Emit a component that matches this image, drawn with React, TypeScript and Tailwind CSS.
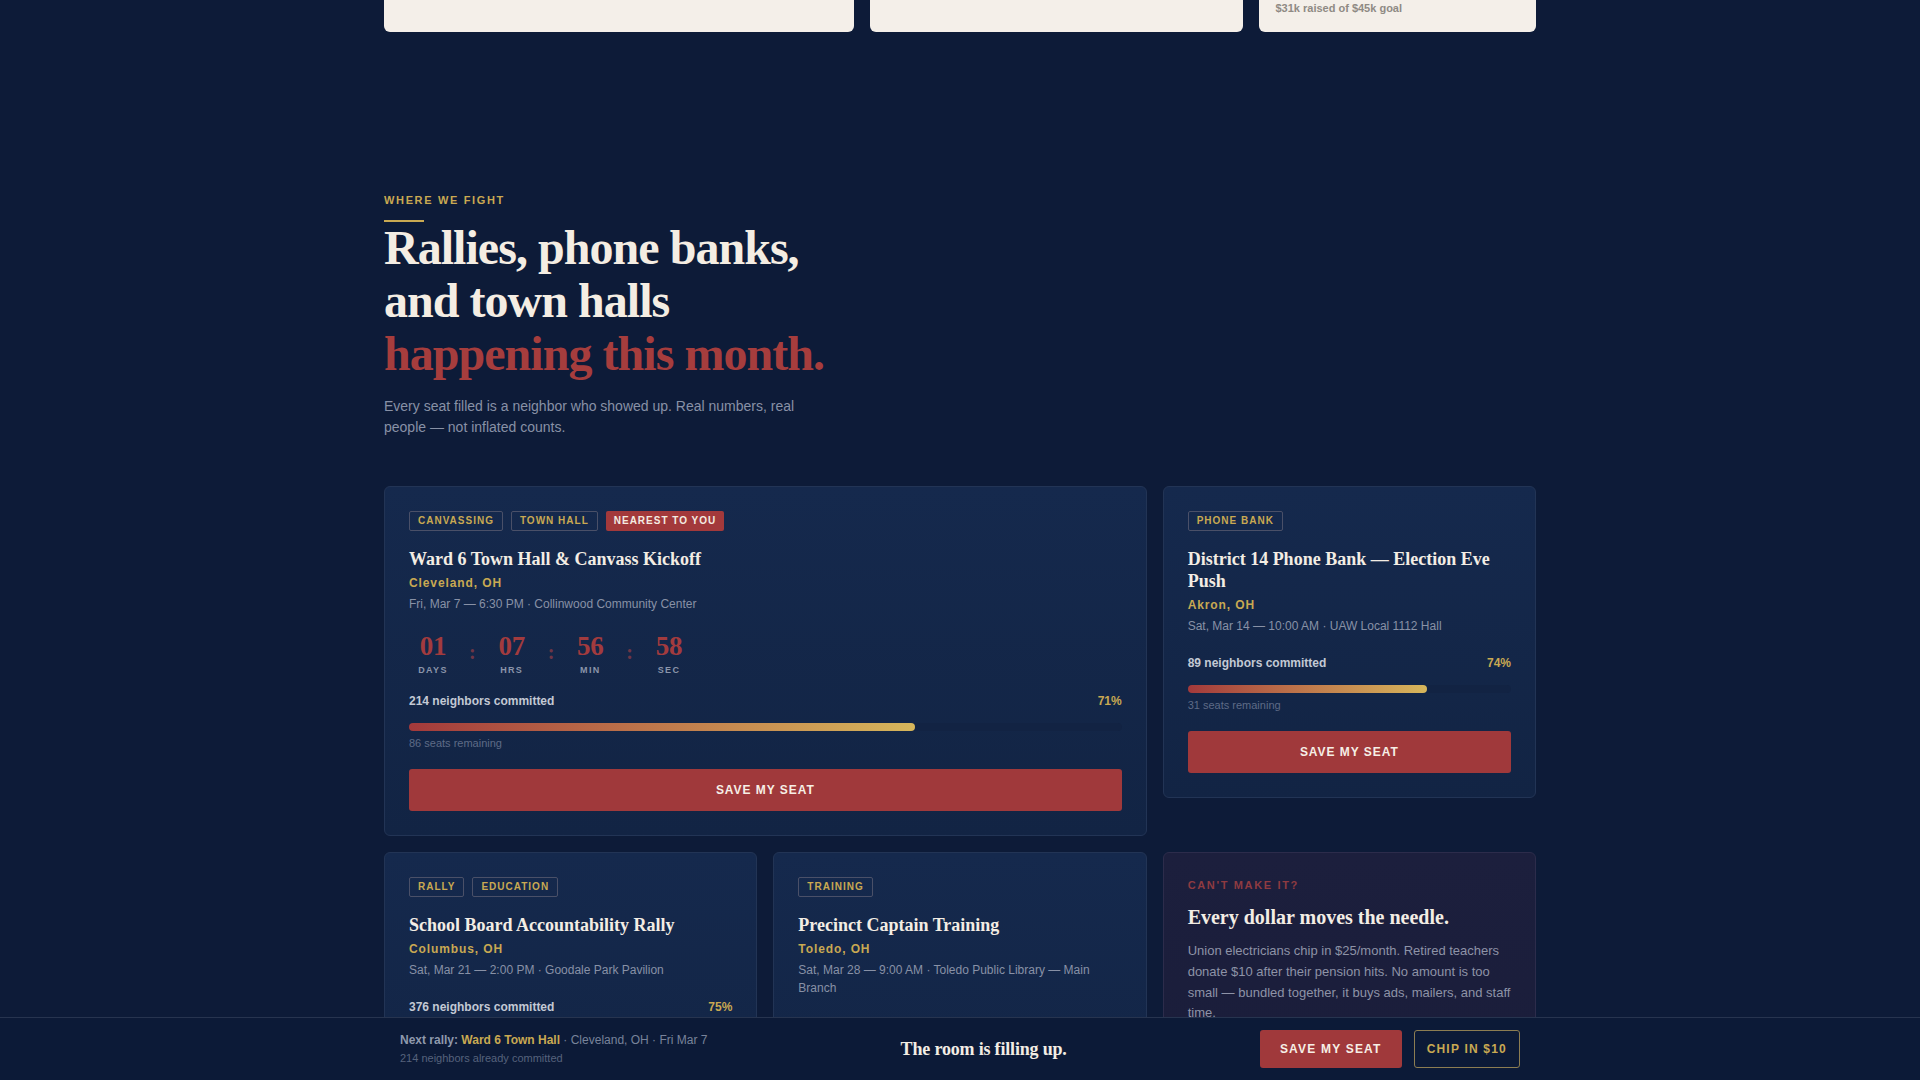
import { FC } from 'react'

type EventItem = {
  tags: string[]
  nearest?: boolean
  title: string
  city: string
  when: string
  committed: number
  pct: number
  remaining: number
  countdown?: { value: string; label: string }[]
}

const serif = "font-['Liberation_Serif','Times_New_Roman',serif]"

const events: EventItem[] = [
  {
    tags: ['Canvassing', 'Town Hall'],
    nearest: true,
    title: 'Ward 6 Town Hall & Canvass Kickoff',
    city: 'Cleveland, OH',
    when: 'Fri, Mar 7 — 6:30 PM · Collinwood Community Center',
    committed: 214,
    pct: 71,
    remaining: 86,
    countdown: [
      { value: '01', label: 'Days' },
      { value: '07', label: 'Hrs' },
      { value: '56', label: 'Min' },
      { value: '58', label: 'Sec' },
    ],
  },
  {
    tags: ['Phone Bank'],
    title: 'District 14 Phone Bank — Election Eve Push',
    city: 'Akron, OH',
    when: 'Sat, Mar 14 — 10:00 AM · UAW Local 1112 Hall',
    committed: 89,
    pct: 74,
    remaining: 31,
  },
  {
    tags: ['Rally', 'Education'],
    title: 'School Board Accountability Rally',
    city: 'Columbus, OH',
    when: 'Sat, Mar 21 — 2:00 PM · Goodale Park Pavilion',
    committed: 376,
    pct: 75,
    remaining: 124,
  },
  {
    tags: ['Training'],
    title: 'Precinct Captain Training',
    city: 'Toledo, OH',
    when: 'Sat, Mar 28 — 9:00 AM · Toledo Public Library — Main Branch',
    committed: 38,
    pct: 63,
    remaining: 22,
  },
]

const Tag: FC<{ label: string; hot?: boolean }> = ({ label, hot }) =>
  hot ? (
    <span className="rounded-[2px] bg-[#a3393b] px-2 py-1 text-[10px] font-bold uppercase leading-3 tracking-[0.1em] text-[#f4ece2]">
      {label}
    </span>
  ) : (
    <span className="rounded-[2px] border border-[#4a5068] px-2 py-[3px] text-[10px] font-bold uppercase leading-3 tracking-[0.1em] text-[#c9a952]">
      {label}
    </span>
  )

const Countdown: FC<{ units: { value: string; label: string }[] }> = ({ units }) => (
  <div className="mt-5 flex items-center">
    {units.map((u, i) => (
      <div key={u.label} className="flex items-center">
        {i > 0 && <span className={`${serif} mx-3 -mt-1 text-[20px] font-bold leading-none text-[#6f3646]`}>:</span>}
        <div className="flex w-12 flex-col items-center">
          <span className={`${serif} text-[27px] font-bold leading-none tracking-[-0.01em] text-[#a23b3e]`}>{u.value}</span>
          <span className="mt-1 text-[9px] font-bold uppercase leading-3 tracking-[0.15em] text-[#8b95aa]">{u.label}</span>
        </div>
      </div>
    ))}
  </div>
)

const EventCard: FC<{ event: EventItem; wide?: boolean }> = ({ event, wide }) => (
  <div
    className={`${wide ? 'col-span-2' : ''} rounded-md border border-[#223455] bg-gradient-to-b from-[#15294d] to-[#122444] p-6`}
  >
    <div className="flex gap-2">
      {event.tags.map((t) => (
        <Tag key={t} label={t} />
      ))}
      {event.nearest && <Tag label="Nearest to you" hot />}
    </div>
    <h3 className={`${serif} mt-4.5 text-[18px] font-bold leading-[1.2] text-[#f3ede4]`}>{event.title}</h3>
    <div className="mt-1 text-xs font-bold leading-4 tracking-[0.075em] text-[#c9a952]">{event.city}</div>
    <div className="mt-1 text-xs leading-[18px] text-[#8891a6]">{event.when}</div>

    {event.countdown && <Countdown units={event.countdown} />}

    <div className={event.countdown ? 'mt-[17px]' : 'mt-5'}>
      <div className="flex items-center justify-between text-xs font-bold leading-4">
        <span className="text-[#c3c9d4]">{event.committed} neighbors committed</span>
        <span className="text-[#c9a952]">{event.pct}%</span>
      </div>
      <div className="mt-3.5 h-2 w-full rounded-full bg-[#122343]">
        <div
          className="h-2 rounded-full bg-gradient-to-r from-[#a3393b] to-[#d6b65b]"
          style={{ width: `${event.pct}%` }}
        />
      </div>
      <div className="mt-1 text-[11px] leading-4 text-[#5e6b86]">{event.remaining} seats remaining</div>
    </div>

    <button className="mt-[18px] flex h-[42px] w-full items-center justify-center rounded-[3px] bg-[#a0393b] text-xs font-bold uppercase tracking-[0.08em] text-[#f6efe6]">
      Save my seat
    </button>
  </div>
)

const DonateCard: FC = () => (
  <div className="rounded-md border border-[#2c2c4b] bg-gradient-to-b from-[#1c1f3d] to-[#1a1d3a] p-6">
    <div className="text-[11px] font-bold uppercase leading-4 tracking-[0.15em] text-[#8f3b41]">Can&apos;t make it?</div>
    <h3 className={`${serif} mt-3 text-[20px] font-bold leading-[1.2] text-[#f3ede4]`}>Every dollar moves the needle.</h3>
    <p className="mt-3 text-[13px] leading-[1.6] text-[#8e93a7]">
      Union electricians chip in $25/month. Retired teachers donate $10 after their pension hits. No amount is too
      small — bundled together, it buys ads, mailers, and staff time.
    </p>
    <button className="mt-5 flex h-[42px] w-full items-center justify-center rounded-[3px] border border-[#8c7a4c] text-xs font-bold uppercase tracking-[0.08em] text-[#c9a952]">
      Chip in $10
    </button>
  </div>
)

const StickyBar: FC = () => (
  <div className="fixed inset-x-0 bottom-0 border-t border-[#27344f] bg-[#0c1a37]">
    <div className="mx-auto flex max-w-6xl items-center justify-between px-4 py-3">
      <div>
        <div className="text-xs leading-4 text-[#78839a]">
          <span className="font-bold text-[#8f99ad]">Next rally: </span>
          <span className="font-bold text-[#c9a952]">Ward 6 Town Hall</span> · Cleveland, OH · Fri Mar 7
        </div>
        <div className="mt-0.5 text-[11px] leading-4 text-[#56627c]">214 neighbors already committed</div>
      </div>
      <div className={`${serif} text-[18px] font-bold tracking-[-0.01em] text-[#f3ede4]`}>The room is filling up.</div>
      <div className="flex gap-3">
        <button className="flex h-[38px] items-center rounded-[3px] bg-[#a0393b] px-5 text-xs font-bold uppercase tracking-[0.1em] text-[#f6efe6]">
          Save my seat
        </button>
        <button className="flex h-[38px] items-center rounded-[3px] border border-[#8c7d52] px-3 text-xs font-bold uppercase tracking-[0.1em] text-[#c9a952]">
          Chip in $10
        </button>
      </div>
    </div>
  </div>
)

const App: FC = () => {
  const [featured, phoneBank, ...rest] = events

  return (
    <div className="min-h-screen bg-[#0d1b38] pb-24 font-['Liberation_Sans',Arial,sans-serif]">
      <div className="mx-auto max-w-6xl">
        {/* tail end of the fundraising cards above */}
        <div className="grid h-8 grid-cols-[1.7fr_1.35fr_1fr] gap-4">
          <div className="rounded-b-md bg-[#f4efe9]" />
          <div className="rounded-b-md bg-[#f4efe9]" />
          <div className="rounded-b-md bg-[#f4efe9] px-4 text-[11px] font-bold leading-4 text-[#8f8a84]">
            $31k raised of $45k goal
          </div>
        </div>

        <section className="pt-40">
          <div className="text-[11px] font-bold uppercase leading-4 tracking-[0.15em] text-[#c9a952]">Where we fight</div>
          <div className="mt-3 h-0.5 w-10 bg-[#c9a952]" />
          <h2 className={`${serif} text-5xl font-bold leading-[1.1] tracking-[-0.02em] text-[#f4ede3]`}>
            Rallies, phone banks,
            <br />
            and town halls
            <br />
            <span className="text-[#a63d3d]">happening this month.</span>
          </h2>
          <p className="mt-4 max-w-md text-sm leading-[1.5] text-[#8891a6]">
            Every seat filled is a neighbor who showed up. Real numbers, real people — not inflated counts.
          </p>

          <div className="mt-12 grid grid-cols-3 items-start gap-4">
            <EventCard event={featured} wide />
            <EventCard event={phoneBank} />
            {rest.map((e) => (
              <EventCard key={e.title} event={e} />
            ))}
            <DonateCard />
          </div>
        </section>
      </div>

      <StickyBar />
    </div>
  )
}

export default App
